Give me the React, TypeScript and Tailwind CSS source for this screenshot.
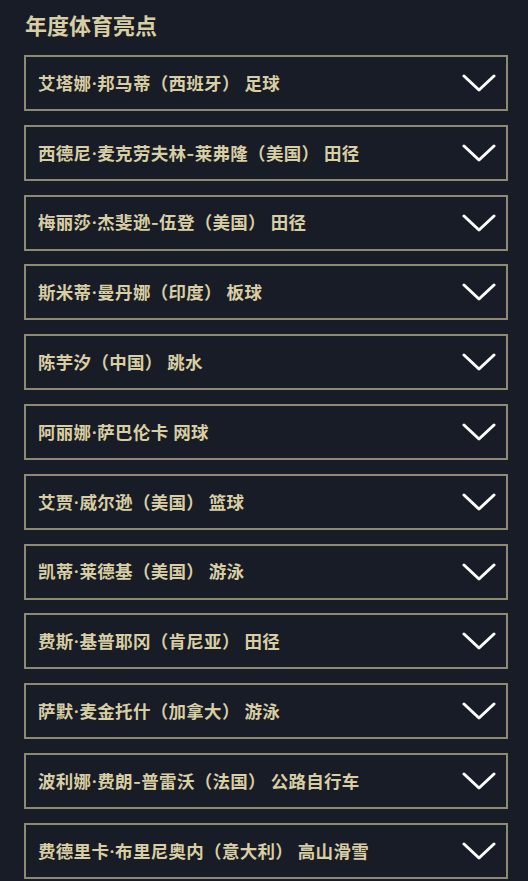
import React, { useState } from 'react';

const highlights = [
    '艾塔娜·邦马蒂（西班牙） 足球',
    '西德尼·麦克劳夫林-莱弗隆（美国） 田径',
    '梅丽莎·杰斐逊-伍登（美国） 田径',
    '斯米蒂·曼丹娜（印度） 板球',
    '陈芋汐（中国） 跳水',
    '阿丽娜·萨巴伦卡 网球',
    '艾贾·威尔逊（美国） 篮球',
    '凯蒂·莱德基（美国） 游泳',
    '费斯·基普耶冈（肯尼亚） 田径',
    '萨默·麦金托什（加拿大） 游泳',
    '波利娜·费朗-普雷沃（法国） 公路自行车',
    '费德里卡·布里尼奥内（意大利） 高山滑雪',
];

const Chevron = () => (
    <svg width="34" height="20" viewBox="0 0 34 20" fill="none">
        <path d="M2 3 L17 17 L32 3" stroke="#ffffff" strokeWidth="3" strokeLinecap="round" strokeLinejoin="round" />
    </svg>
);

const App: React.FC = () => {
    const [open, setOpen] = useState<number | null>(null);

    return (
        <div className="min-h-screen bg-[#181c26] px-6 pt-[11px] font-['Inter','Noto_Sans_CJK_SC',sans-serif]">
            <h1 className="text-[22px] leading-[30px] font-bold text-[#d8cea4] pl-[1px]">年度体育亮点</h1>
            <div className="mt-[14px] flex flex-col gap-[13.8px]">
                {highlights.map((item, i) => (
                    <button
                        key={i}
                        onClick={() => setOpen(open === i ? null : i)}
                        className="h-[56px] w-[484px] border-2 border-[#8e8973] flex items-center justify-between pl-3 pr-[10px] text-left"
                    >
                        <span className="text-[17.5px] font-semibold text-[#d8cea4] tracking-[0.3px] pt-[2px]">{item}</span>
                        <Chevron />
                    </button>
                ))}
            </div>
        </div>
    );
};

export default App;
